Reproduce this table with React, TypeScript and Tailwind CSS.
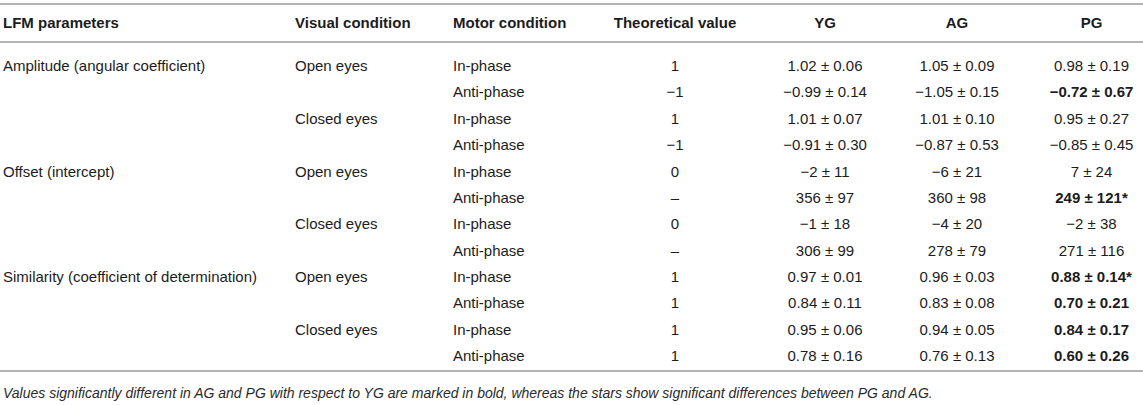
import React from "react";

type Row = {
  param?: string;
  visual?: string;
  motor: string;
  theo: string;
  yg: string;
  ag: string;
  pg: string;
  bold?: boolean;
};

const rows: Row[] = [
  { param: "Amplitude (angular coefficient)", visual: "Open eyes", motor: "In-phase", theo: "1", yg: "1.02 ± 0.06", ag: "1.05 ± 0.09", pg: "0.98 ± 0.19" },
  { motor: "Anti-phase", theo: "−1", yg: "−0.99 ± 0.14", ag: "−1.05 ± 0.15", pg: "−0.72 ± 0.67", bold: true },
  { visual: "Closed eyes", motor: "In-phase", theo: "1", yg: "1.01 ± 0.07", ag: "1.01 ± 0.10", pg: "0.95 ± 0.27" },
  { motor: "Anti-phase", theo: "−1", yg: "−0.91 ± 0.30", ag: "−0.87 ± 0.53", pg: "−0.85 ± 0.45" },
  { param: "Offset (intercept)", visual: "Open eyes", motor: "In-phase", theo: "0", yg: "−2 ± 11", ag: "−6 ± 21", pg: "7 ± 24" },
  { motor: "Anti-phase", theo: "–", yg: "356 ± 97", ag: "360 ± 98", pg: "249 ± 121*", bold: true },
  { visual: "Closed eyes", motor: "In-phase", theo: "0", yg: "−1 ± 18", ag: "−4 ± 20", pg: "−2 ± 38" },
  { motor: "Anti-phase", theo: "–", yg: "306 ± 99", ag: "278 ± 79", pg: "271 ± 116" },
  { param: "Similarity (coefficient of determination)", visual: "Open eyes", motor: "In-phase", theo: "1", yg: "0.97 ± 0.01", ag: "0.96 ± 0.03", pg: "0.88 ± 0.14*", bold: true },
  { motor: "Anti-phase", theo: "1", yg: "0.84 ± 0.11", ag: "0.83 ± 0.08", pg: "0.70 ± 0.21", bold: true },
  { visual: "Closed eyes", motor: "In-phase", theo: "1", yg: "0.95 ± 0.06", ag: "0.94 ± 0.05", pg: "0.84 ± 0.17", bold: true },
  { motor: "Anti-phase", theo: "1", yg: "0.78 ± 0.16", ag: "0.76 ± 0.13", pg: "0.60 ± 0.26", bold: true },
];

const cols = "grid grid-cols-[292px_158px_160px_130px_170px_94px_139px]";

export default function App() {
  return (
    <div className="w-[1143px] bg-white pt-[3px] text-[15px] text-[#1c1c1c] font-['Liberation_Sans',Arial,sans-serif]">
      {/* header */}
      <div className={`${cols} h-[40px] items-center border-y-2 border-[#b4b4b4] font-bold`}>
        <div className="pl-[3px]">LFM parameters</div>
        <div className="pl-[3px]">Visual condition</div>
        <div className="pl-[3px]">Motor condition</div>
        <div className="text-center">Theoretical value</div>
        <div className="text-center">YG</div>
        <div className="text-center">AG</div>
        <div className="pl-[36px] text-center">PG</div>
      </div>

      {/* body */}
      <div className="pt-[10px] border-b-2 border-[#b4b4b4]">
        {rows.map((r, i) => (
          <div key={i} className={`${cols} h-[26.4px] items-center`}>
            <div className="pl-[3px] whitespace-nowrap">{r.param ?? ""}</div>
            <div className="pl-[3px]">{r.visual ?? ""}</div>
            <div className="pl-[3px]">{r.motor}</div>
            <div className="text-center">{r.theo}</div>
            <div className="text-center">{r.yg}</div>
            <div className="text-center">{r.ag}</div>
            <div className={`pl-[36px] text-center whitespace-nowrap ${r.bold ? "font-bold" : ""}`}>{r.pg}</div>
          </div>
        ))}
      </div>

      <p className="pl-[3px] pt-[11px] text-[14px] italic text-[#2a2a2a] leading-[20px]">
        Values significantly different in AG and PG with respect to YG are marked in bold, whereas the stars show significant differences between PG and AG.
      </p>
    </div>
  );
}
